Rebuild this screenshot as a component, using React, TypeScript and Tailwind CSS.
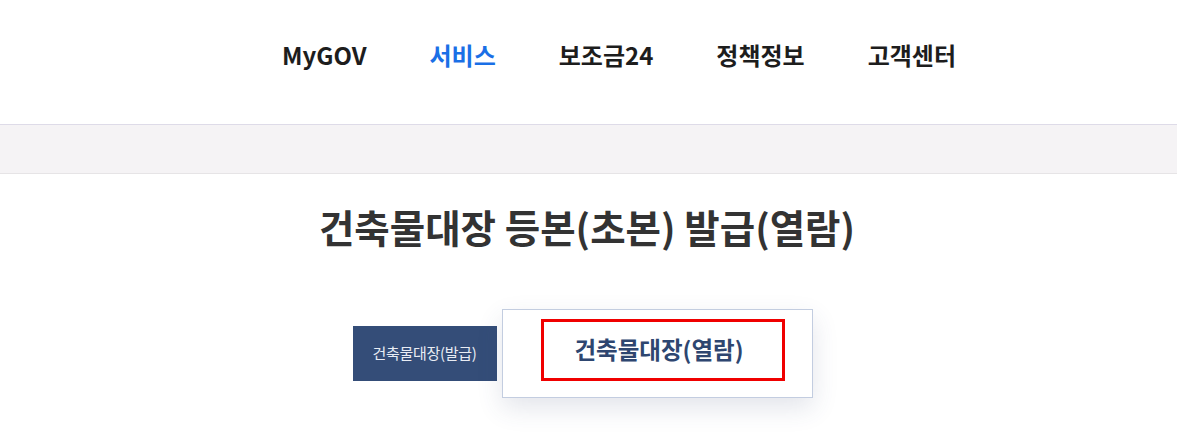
export default function App() {
  const menus = ["MyGOV", "서비스", "보조금24", "정책정보", "고객센터"];
  return (
    <div className="min-h-[442px] bg-white font-['Noto_Sans_CJK_KR','Noto_Sans',sans-serif]">
      {/* top navigation */}
      <nav className="flex h-[124px] items-start justify-center pt-[34px]">
        <ul className="ml-[61px] flex gap-[63px]">
          {menus.map((m) => (
            <li
              key={m}
              className={`text-[24px] font-bold leading-[42px] ${
                m === "서비스" ? "text-[#1a6fe6]" : "text-[#1d1d1d]"
              }`}
            >
              {m}
            </li>
          ))}
        </ul>
      </nav>

      {/* breadcrumb band */}
      <div className="h-[50px] border-t border-b border-t-[#dedbe8] border-b-[#e6e4e6] bg-[#f5f3f5]" />

      {/* page title */}
      <h1 className="mt-[24px] pr-[3px] text-center text-[38.5px] font-bold leading-[56px] text-[#333]">
        건축물대장 등본(초본) 발급(열람)
      </h1>

      {/* tabs */}
      <div className="mt-[55px] flex items-center justify-center gap-[5px] pr-[12px]">
        <button className="h-[55px] w-[144px] bg-[#344d78] text-[15px] tracking-[-0.3px] text-[#e8ecf3]">
          건축물대장(발급)
        </button>
        <div className="flex h-[89px] w-[311px] items-start border border-[#c3cde0] bg-white pl-[38px] pt-[9px] shadow-[0_10px_24px_rgba(60,70,110,0.14)]">
          <div className="flex h-[62px] w-[244px] items-center justify-center border-[3px] border-[#f00000] pr-[7px]">
            <span className="text-[23.5px] font-bold text-[#2e4670]">건축물대장(열람)</span>
          </div>
        </div>
      </div>
    </div>
  );
}
